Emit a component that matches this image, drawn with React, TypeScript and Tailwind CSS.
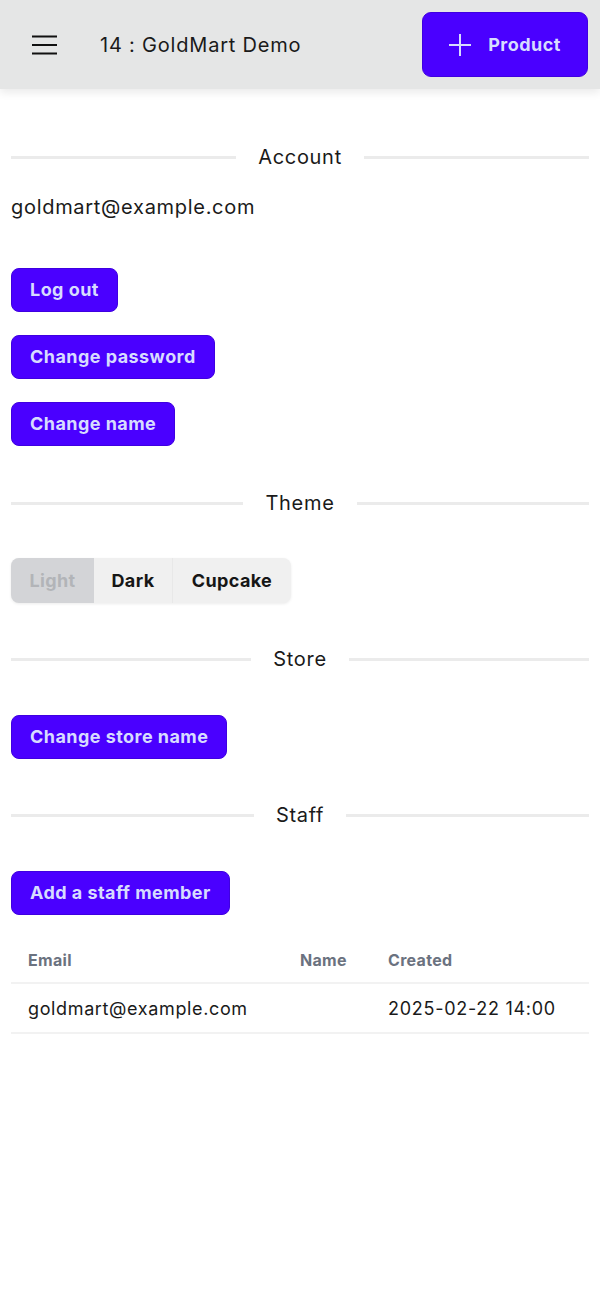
import React from "react";

function Divider({ label, className = "" }: { label: string; className?: string }) {
  return (
    <div className={`flex items-center gap-[22px] h-[28px] ${className}`}>
      <div className="flex-1 h-[3px] bg-[#ebebeb]" />
      <span className="text-[20px] leading-[28px] text-[#1a1a1a] tracking-[0.035em]">{label}</span>
      <div className="flex-1 h-[3px] bg-[#ebebeb]" />
    </div>
  );
}

function Btn({ children, className = "" }: { children: React.ReactNode; className?: string }) {
  return (
    <div className={className}>
      <button className="h-[44px] px-[18px] rounded-[8px] bg-[#4a00ff] border border-[#3f00e0] text-[#d7dcff] text-[18px] font-bold tracking-[0.025em] leading-none">
        {children}
      </button>
    </div>
  );
}

export default function App() {
  return (
    <div className="min-h-[1300px] bg-white" style={{ fontFamily: "Inter, 'Noto Sans', sans-serif" }}>
      <header className="h-[89px] bg-[#e5e6e6] shadow-[0_4px_8px_rgba(0,0,0,0.08)] flex items-center pl-[32px] pr-[12px] relative z-10">
        <svg width="25" height="20" viewBox="0 0 25 20" className="text-[#111]">
          <path d="M0 1.5h25M0 10h25M0 18.5h25" stroke="currentColor" strokeWidth="2.2" />
        </svg>
        <span className="ml-[43px] text-[20px] text-[#1a1a1a] tracking-[0.04em]">14 : GoldMart Demo</span>
        <button className="ml-auto h-[65px] w-[166px] rounded-[9px] bg-[#4a00ff] border border-[#3f00e0] flex items-center justify-center gap-[17px] text-[#d7dcff] text-[18px] font-bold tracking-[0.025em]">
          <svg width="22" height="22" viewBox="0 0 22 22">
            <path d="M11 0v22M0 11h22" stroke="currentColor" strokeWidth="2" />
          </svg>
          <span>Product</span>
        </button>
      </header>
      <main className="px-[11px]">
        <Divider label="Account" className="mt-[54px]" />
        <div className="mt-[22px] text-[20px] leading-[28px] text-[#1a1a1a] tracking-[0.035em]">goldmart@example.com</div>
        <Btn className="mt-[47px]">Log out</Btn>
        <Btn className="mt-[23px]">Change password</Btn>
        <Btn className="mt-[23px]">Change name</Btn>
        <Divider label="Theme" className="mt-[43px]" />
        <div className="mt-[41px] flex">
          <div className="inline-flex h-[45px] rounded-[8px] bg-[#f0f0f0] shadow-[0_1px_3px_rgba(0,0,0,0.08)] overflow-hidden text-[18px] font-bold tracking-[0.02em]">
            <div className="w-[83px] flex items-center justify-center bg-[#d3d4d7] text-[#b2b4b8]">Light</div>
            <div className="w-[79px] flex items-center justify-center text-[#161616] border-r border-[#e8e8e8]">Dark</div>
            <div className="w-[118px] flex items-center justify-center text-[#161616]">Cupcake</div>
          </div>
        </div>
        <Divider label="Store" className="mt-[42px]" />
        <Btn className="mt-[42px]">Change store name</Btn>
        <Divider label="Staff" className="mt-[42px]" />
        <Btn className="mt-[42px]">Add a staff member</Btn>
        <table className="mt-[22px] w-full border-collapse">
          <thead>
            <tr className="border-b-2 border-[#f2f2f2] h-[46px]">
              <th className="w-[272px] pl-[17px] text-left text-[16px] font-bold tracking-[0.02em] text-[#6b7280]">Email</th>
              <th className="w-[88px] pl-[17px] text-left text-[16px] font-bold tracking-[0.02em] text-[#6b7280]">Name</th>
              <th className="pl-[17px] text-left text-[16px] font-bold tracking-[0.02em] text-[#6b7280]">Created</th>
            </tr>
          </thead>
          <tbody>
            <tr className="border-b-2 border-[#f2f2f2] h-[50px]">
              <td className="pl-[17px] text-[18px] text-[#1a1a1a] tracking-[0.035em]">goldmart@example.com</td>
              <td className="pl-[17px]"></td>
              <td className="pl-[17px] text-[18px] text-[#1a1a1a] tracking-[0.04em]">2025-02-22 14:00</td>
            </tr>
          </tbody>
        </table>
      </main>
    </div>
  );
}
